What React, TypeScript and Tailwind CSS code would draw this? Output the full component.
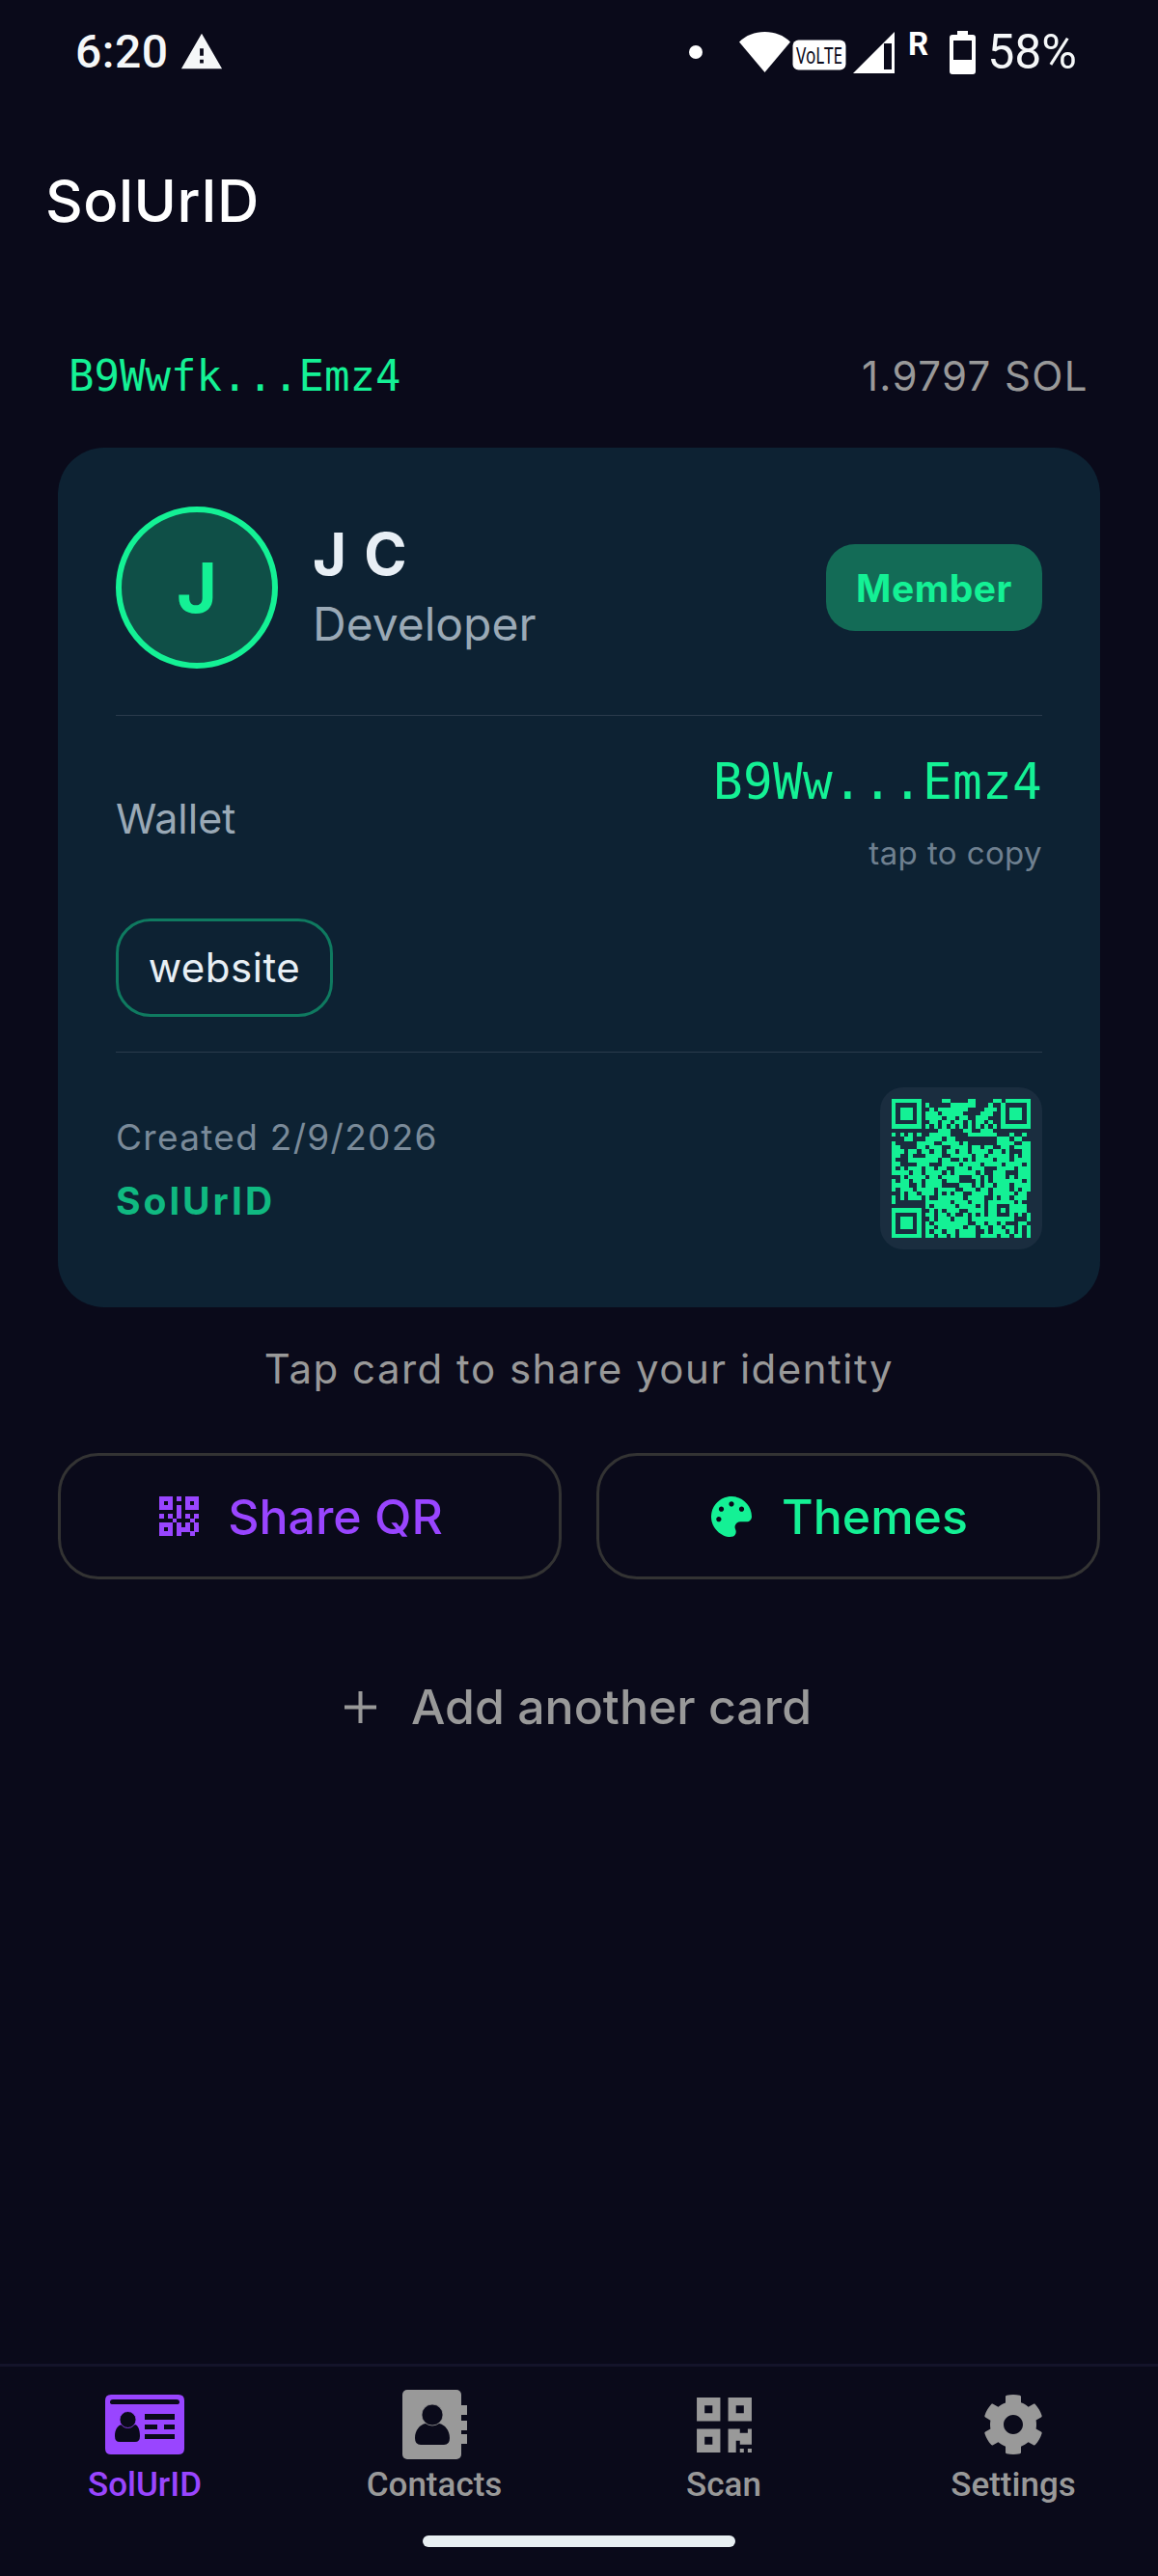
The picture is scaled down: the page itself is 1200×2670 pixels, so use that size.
import React from "react";
import { FaQrcode, FaCog, FaPalette } from "react-icons/fa";
import { MdWarning } from "react-icons/md";

const inter = "font-['Inter',sans-serif]";
const roboto = "font-['Roboto',sans-serif]";
const mono = "font-['DejaVu_Sans_Mono',monospace]";

const QR_ROWS = [
  "1111111.....11....11....11.1111111",
  "1.....1.1.....111111...1..1.....1",
  "1.111.1..1.1111111....111.1.111.1",
  "1.111.1.111.11111....111..1.111.1",
  "1.111.1.1111.11.11..111...1.111.1",
  "1.....1..11.11.11.1.11.1..1.....1",
  "1111111.1.1.1.1.1.1.1.1.1.1111111",
  "...........111...11..111.........",
  "1.1.1.1..11111....1111111...1..1.",
  "...11...1111.11..........111.11..",
  "1.....1111..1111.1.......1111..11",
  "11....11.111..1111.11.11..11.1111",
  "111.11.11.11.11.11.1111.11.1...11",
  "11..1...1111..11111.11.11111.1.11",
  "1...1111111.11..1.1.1111.111.1111",
  "11....111...1111.1111.1111.1111.1",
  "1.1.111.11.11..111.111...1111.111",
  "1111.11.1111.1.11111.1..111...111",
  "..1.1111.11.1111...11.1.111.1.111",
  "1.11.11.1111.111....1.1.1111111.1",
  "1111..1.1111....111.1.11.111.1111",
  "1.111.1111.1111..111.11.1111.1.11",
  "..1.11.111.1.1.11..1111.11111.11.",
  "1.1.111.1..111111.1111..1.11.111.",
  "1.......111111.111.111.111111.1..",
  "........1.11111.1111.1.11...1111.",
  "1111111..1.1.111..1111.11.1.1111.",
  "1.....1.11.11.1..1.1.1.11...1.1.1",
  "1.111.1..1.111.111.1111111111...1",
  "1.111.1.1.11111111..11.11.1...11.",
  "1.111.1.11.111111.11.11.11.11.1.1",
  "1.....1.1.11.11.1111..1.111.1.1.1",
  "1111111.11.11.1.1111.1111.11.11.1",
];

function QrCode() {
  const rects: React.ReactNode[] = [];
  QR_ROWS.forEach((row, y) => {
    row.padEnd(33, ".").slice(0, 33).split("").forEach((c, x) => {
      if (c === "1") rects.push(<rect key={`${x}-${y}`} x={x} y={y} width={1.02} height={1.02} />);
    });
  });
  return (
    <svg viewBox="0 0 33 33" width="144" height="144" fill="#14f195" shapeRendering="crispEdges">
      {rects}
    </svg>
  );
}

function ShareQrIcon() {
  const cells = [
    "111.1.111",
    "1.1...1.1",
    "111.1.111",
    "....1....",
    "1.1.1.1.1",
    "...1...1.",
    "111.1.1.1",
    "1.1.111.1",
    "111.1..1.",
  ];
  const rects: React.ReactNode[] = [];
  cells.forEach((r, y) =>
    r.split("").forEach((c, x) => {
      if (c === "1") rects.push(<rect key={`${x}-${y}`} x={x} y={y} width={1.02} height={1.02} />);
    }),
  );
  return (
    <svg viewBox="0 0 9 9" width="41" height="41" fill="#9945ff" shapeRendering="crispEdges">
      {rects}
    </svg>
  );
}

function IdCardIcon() {
  return (
    <svg width="82" height="62" viewBox="0 0 82 62">
      <path
        fill="#9945ff"
        fillRule="evenodd"
        d="M6 0H76Q82 0 82 6V56Q82 62 76 62H6Q0 62 0 56V6Q0 0 6 0ZM8 5Q5 5 5 8Q5 10 8 10H74Q77 10 77 8Q77 5 74 5ZM41 20V26H72V20ZM41 31V36H54V31ZM61 31V36H72V31ZM41 41V46H72V41Z"
      />
      <path fill="#0a0a1a" d="M10 43C10 36 13 32 17 31Q24 34 31 31C34 32 36 36 36 43Q36 49 31 49H15Q10 49 10 43Z" />
      <circle cx="23.5" cy="26" r="8.5" fill="#0a0a1a" stroke="#9945ff" strokeWidth="0.8" />
    </svg>
  );
}

function ContactsIcon() {
  return (
    <svg width="67" height="72" viewBox="0 0 67 72">
      <rect x="0" y="0" width="61" height="72" rx="5" fill="#999999" />
      <rect x="60" y="16" width="7" height="10" fill="#999999" />
      <rect x="60" y="32" width="7" height="10" fill="#999999" />
      <rect x="60" y="46" width="7" height="10" fill="#999999" />
      <path fill="#0a0a1a" d="M13 50C13 42 18 36 24 35Q31 38 38 35C44 36 49 42 49 50Q49 57 43 57H19Q13 57 13 50Z" />
      <circle cx="31" cy="26" r="11" fill="#0a0a1a" stroke="#999999" strokeWidth="0.8" />
    </svg>
  );
}

function StatusBar() {
  return (
    <div className={`${roboto} h-[108px] flex items-center justify-between pl-[78px] pr-[84px] text-white`}>
      <div className="flex items-center gap-[11px]">
        <span className="text-[48px] leading-none font-medium tracking-[0.5px] text-[#f5f7f8]">6:20</span>
        <MdWarning className="text-[#f5f7f8]" size={46} />
      </div>
      <div className="flex items-center">
        <span className="w-[14px] h-[14px] rounded-full bg-white mr-[38px]" />
        <svg width="54" height="44" viewBox="0 0 54 44" fill="#fff" className="mr-[1px]">
          <path d="M0 11.5C7 4.5 16 1 26.5 1S46 4.5 53 11.5L26.5 43Z" />
        </svg>
        <svg width="56" height="32" viewBox="0 0 56 32" className="mt-[5px] mr-[7px] overflow-visible">
          <rect x="0.5" y="0.5" width="55" height="31" rx="6" fill="#fff" />
          <text x="4" y="25" fontSize="24" fill="#0a0a1a" fontFamily="'Noto Sans',sans-serif" textLength="48" lengthAdjust="spacingAndGlyphs">VoLTE</text>
        </svg>
        <svg width="43" height="43" viewBox="0 0 43 43" className="mr-[14px] mt-[1px]">
          <path fillRule="evenodd" fill="#fff" d="M43 0V43H0ZM40 39V12H32V39Z" />
        </svg>
        <span className="text-[33px] leading-none font-bold mb-[18px] mr-[22px]">R</span>
        <svg width="27" height="45" viewBox="0 0 27 45" className="mr-[12px]">
          <path fillRule="evenodd" fill="#fff" d="M8 0H19V4H24Q27 4 27 7V42Q27 45 24 45H3Q0 45 0 42V7Q0 4 3 4H8ZM4 10V30H23V10Z" />
        </svg>
        <span className="text-[50px] leading-none font-normal text-[#f5f7f8]">58%</span>
      </div>
    </div>
  );
}

function NavItem({ icon, label, active }: { icon: React.ReactNode; label: string; active?: boolean }) {
  return (
    <div className="flex flex-col items-center">
      <div className="h-[72px] flex items-center justify-center">{icon}</div>
      <span className={`${roboto} mt-[5px] text-[35px] leading-[44px] font-medium ${active ? "text-[#9945ff]" : "text-[#999999]"}`}>{label}</span>
    </div>
  );
}

export default function App() {
  return (
    <div className={`${inter} w-[1200px] h-[2670px] bg-[#0a0a1a] flex flex-col overflow-hidden`}>
      <StatusBar />

      <div className="px-[47px] pt-[64px] h-[155px]">
        <h1 className="text-[60px] leading-[72px] font-medium text-white tracking-[0.5px]">SolUrID</h1>
      </div>

      <div className="flex items-center justify-between pl-[71px] pr-[72px] mt-[103px] h-[48px]">
        <span className={`${mono} text-[44px] leading-none text-[#14f195]`}>B9Wwfk...Emz4</span>
        <span className="text-[42px] leading-none text-[#999999] tracking-[1.4px]">1.9797 SOL</span>
      </div>

      <div className="mx-[60px] mt-[50px] h-[891px] rounded-[48px] bg-[#0d2233] px-[60px] pt-[61px]">
        <div className="flex items-center h-[168px]">
          <div className="w-[168px] h-[168px] rounded-full border-[6px] border-[#14f195] bg-[#0f4f47] flex items-center justify-center">
            <span className="text-[72px] leading-none font-bold text-[#14f195]">J</span>
          </div>
          <div className="ml-[36px] flex-1 -mt-[7px]">
            <div className="text-[60px] leading-[76px] font-bold text-[#e8eff5] tracking-[2px]">J C</div>
            <div className="mt-[7px] text-[48px] leading-[56px] text-[#9aa9b6]">Developer</div>
          </div>
          <div className="w-[224px] h-[90px] rounded-[30px] bg-[#136b56] flex items-center justify-center">
            <span className="text-[39px] leading-none font-bold text-[#14f195] tracking-[0.5px]">Member</span>
          </div>
        </div>

        <div className="mt-[48px] h-[1px] bg-[#2a3b4c]" />

        <div className="mt-[41px] flex items-start justify-between h-[96px]">
          <span className="mt-[38px] text-[43px] leading-[54px] text-[#9aa9b6]">Wallet</span>
          <div className="flex flex-col items-end">
            <span className={`${mono} text-[51px] leading-[56px] text-[#14f195] tracking-[0.3px]`}>B9Ww...Emz4</span>
            <span className="mt-[26px] text-[33px] leading-[38px] text-[#6f8090] tracking-[0.4px]">tap to copy</span>
          </div>
        </div>

        <div className="mt-[73px] w-[225px] h-[102px] rounded-[36px] border-[3px] border-[#0f7a60] flex items-center justify-center">
          <span className="text-[42px] leading-none text-[#e8eff5] tracking-[0.5px]">website</span>
        </div>

        <div className="mt-[36px] h-[1px] bg-[#2a3b4c]" />

        <div className="mt-[36px] flex justify-between">
          <div className="pt-[29px]">
            <div className="text-[37px] leading-[46px] text-[#7a8a99] tracking-[1.3px]">Created 2/9/2026</div>
            <div className="mt-[20px] text-[39px] leading-[46px] font-bold text-[#10b981] tracking-[3px]">SolUrID</div>
          </div>
          <div className="w-[168px] h-[168px] rounded-[24px] bg-[#1a2d3f] flex items-center justify-center">
            <QrCode />
          </div>
        </div>
      </div>

      <p className="mt-[40px] text-center text-[42px] leading-[48px] text-[#999999] tracking-[1.5px]">Tap card to share your identity</p>

      <div className="mt-[63px] px-[60px] grid grid-cols-2 gap-[36px]">
        <div className="h-[131px] pr-[18px] rounded-[42px] border-[3px] border-[#333333] flex items-center justify-center">
          <ShareQrIcon />
          <span className="ml-[30px] text-[50px] leading-none font-medium text-[#9945ff]">Share QR</span>
        </div>
        <div className="h-[131px] pr-[18px] rounded-[42px] border-[3px] border-[#333333] flex items-center justify-center">
          <FaPalette className="text-[#14f195]" size={42} />
          <span className="ml-[31px] text-[50px] leading-none font-medium text-[#14f195]">Themes</span>
        </div>
      </div>

      <div className="mt-[102px] flex items-center justify-center pr-[2px]">
        <svg width="33" height="33" viewBox="0 0 33 33" stroke="#999999" strokeWidth="4" className="mt-[1px]">
          <path d="M16.5 0V33M0 16.5H33" />
        </svg>
        <span className="ml-[36px] text-[50px] leading-[60px] font-medium text-[#999999]">Add another card</span>
      </div>

      <div className="mt-auto h-[220px] border-t-[3px] border-[#14142a] pt-[24px] relative">
        <div className="grid grid-cols-4">
          <NavItem active label="SolUrID" icon={<IdCardIcon />} />
          <NavItem label="Contacts" icon={<ContactsIcon />} />
          <NavItem label="Scan" icon={<FaQrcode className="text-[#999999]" size={65} />} />
          <NavItem label="Settings" icon={<FaCog className="text-[#999999]" size={64} />} />
        </div>
        <div className="absolute left-[438px] top-[175px] w-[324px] h-[12px] rounded-full bg-[#e8eff2]" />
      </div>
    </div>
  );
}
